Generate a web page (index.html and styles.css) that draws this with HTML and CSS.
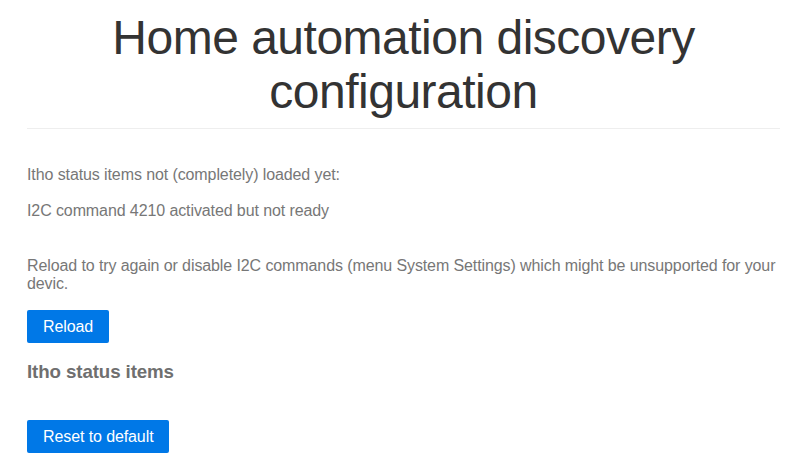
FILE: index.html
```html
<!DOCTYPE html>
<html lang="en">
<head>
  <meta charset="UTF-8">
  <meta name="viewport" content="width=device-width, initial-scale=1">
  <title>HA discovery</title>
  <link rel="stylesheet" href="styles.css">
</head>
<body>
  <div class="main">
    <div class="header">
      <h1>Home automation discovery configuration</h1>
    </div>

    <div class="content">
      <p class="first">Itho status items not (completely) loaded yet:</p>
      <p>I2C command 4210 activated but not ready</p>
      <p class="hint">Reload to try again or disable I2C commands (menu System Settings) which might be unsupported for your devic.</p>
      <button class="button primary">Reload</button>

      <h3>Itho status items</h3>

      <button class="button primary reset">Reset to default</button>
    </div>
  </div>
</body>
</html>
```

FILE: styles.css
```css
/* Base styling */
body {
  margin: 0;
  font-family: "Liberation Sans", Arial, sans-serif;
  font-size: 16px;
  letter-spacing: -0.1px;
  color: #777;
  background: #fff;
}
.main {
  margin: 0 20px 0 27px;
}
.header {
  text-align: center;
  color: #333;
  border-bottom: 1px solid #eee;
  padding: 11px 0 9px;
}
.header h1 {
  margin: 0;
  font-size: 48px;
  font-weight: normal;
  line-height: 54px;
  letter-spacing: -0.5px;
}
.content p {
  margin: 0 0 18px;
  line-height: 18px;
}
.content p.first {
  margin-top: 37px;
}
.content p.hint {
  margin-top: 37px;
  margin-bottom: 17px;
}
.button {
  font-family: inherit;
  font-size: 16px;
  letter-spacing: -0.1px;
  line-height: 17px;
  padding: 8px 16px;
  border: none;
  border-radius: 2px;
  cursor: pointer;
}
.primary {
  background: #0078e7;
  color: #fff;
}
.content h3 {
  margin: 18px 0 37px;
  font-size: 18.72px;
  line-height: 22px;
  color: #6f6f6f;
}
```
